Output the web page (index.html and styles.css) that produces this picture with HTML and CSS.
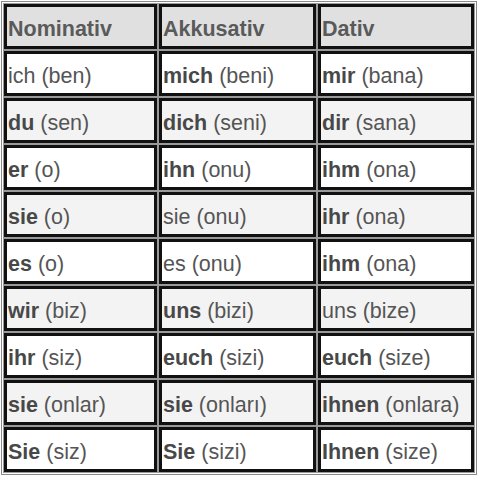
FILE: index.html
```html
<!DOCTYPE html>
<html>
<head>
<meta charset="utf-8">
<link rel="stylesheet" href="styles.css">
</head>
<body>
<table class="grid">
  <tr class="head"><td class="c1">Nominativ</td><td class="c2">Akkusativ</td><td class="c3">Dativ</td></tr>
  <tr><td>ich (ben)</td><td><b>mich</b> (beni)</td><td><b>mir</b> (bana)</td></tr>
  <tr class="alt"><td><b>du</b> (sen)</td><td><b>dich</b> (seni)</td><td><b>dir</b> (sana)</td></tr>
  <tr><td><b>er</b> (o)</td><td><b>ihn</b> (onu)</td><td><b>ihm</b> (ona)</td></tr>
  <tr class="alt"><td><b>sie</b> (o)</td><td>sie (onu)</td><td><b>ihr</b> (ona)</td></tr>
  <tr><td><b>es</b> (o)</td><td>es (onu)</td><td><b>ihm</b> (ona)</td></tr>
  <tr class="alt"><td><b>wir</b> (biz)</td><td><b>uns</b> (bizi)</td><td>uns (bize)</td></tr>
  <tr><td><b>ihr</b> (siz)</td><td><b>euch</b> (sizi)</td><td><b>euch</b> (size)</td></tr>
  <tr class="alt"><td><b>sie</b> (onlar)</td><td><b>sie</b> (onları)</td><td><b>ihnen</b> (onlara)</td></tr>
  <tr><td><b>Sie</b> (siz)</td><td><b>Sie</b> (sizi)</td><td><b>Ihnen</b> (size)</td></tr>
</table>
</body>
</html>
```
FILE: styles.css
```css
html, body {
  margin: 0;
  padding: 0;
  background: #ffffff;
}
.grid {
  margin: 1px 0 0 1px;
  width: 476px;
  border: 1px solid #8a8a8a;
  border-spacing: 2px;
  font-family: "Liberation Sans", Arial, sans-serif;
  font-size: 21.5px;
  color: #555555;
}
.grid td {
  border: 3px solid #111111;
  box-shadow: 0 0 0 1px #9a9a9a;
  height: 34px;
  padding: 5px 0 0 1px;
  background: #ffffff;
  white-space: nowrap;
  vertical-align: middle;
}
.grid tr.alt td {
  background: #f3f3f3;
}
.grid tr.head td {
  background: #e0e0e0;
  font-weight: bold;
  color: #5a5a5a;
}
.grid b {
  color: #484848;
}
.c1 { width: 146px; }
.c2 { width: 150px; }
```
